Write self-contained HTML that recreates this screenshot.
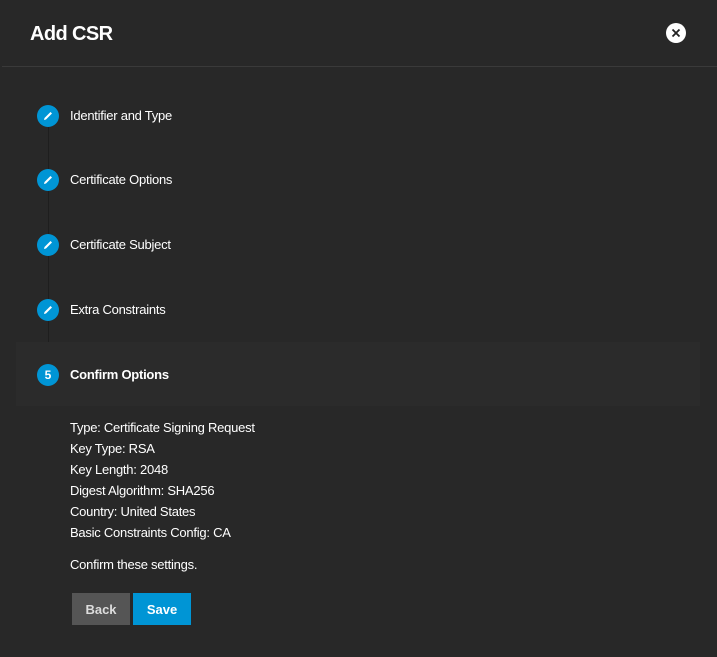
<!DOCTYPE html>
<html><head><style>
body{margin:0;width:717px;height:657px;background:#282828;font-family:"Liberation Sans",sans-serif;color:#fff;position:relative;overflow:hidden}
.t{position:absolute;left:30px;top:23px;font-size:20px;font-weight:bold;letter-spacing:-0.6px}
.x{position:absolute;left:666px;top:23px;width:20px;height:20px;border-radius:50%;background:#fff}
.hr{position:absolute;left:2px;right:0;top:66px;height:1px;background:#3a3a3a}
.line{position:absolute;left:48px;width:1px;background:#1e1e1e}
.st{position:absolute;left:37px;width:22px;height:22px;border-radius:50%;background:#0095d5;display:flex;align-items:center;justify-content:center;font-size:12px;font-weight:bold}
.lb{position:absolute;left:70px;font-size:13px;letter-spacing:-0.25px}
.act{position:absolute;left:16px;width:684px;top:342px;height:64px;background:#2b2b2b}
.c{position:absolute;left:70px;font-size:13px;line-height:21px;top:417px;letter-spacing:-0.25px}
.b{position:absolute;top:593px;height:32px;width:58px;font-size:13px;font-weight:bold;display:flex;align-items:center;justify-content:center}
</style></head><body>
<div class="t">Add CSR</div>
<div class="x"><svg width="20" height="20"><path d="M6.5 6.5L13.5 13.5M13.5 6.5L6.5 13.5" stroke="#222" stroke-width="1.8"/></svg></div>
<div class="hr"></div>
<div class="line" style="top:127px;height:220px"></div>
<div class="act"></div>
<div class="st" style="top:105px"><svg width="12" height="12"><path d="M2 10L2.5 8L8.5 2L10 3.5L4 9.5Z" fill="#fff"/></svg></div>
<div class="lb" style="top:108px">Identifier and Type</div>
<div class="st" style="top:169px"><svg width="12" height="12"><path d="M2 10L2.5 8L8.5 2L10 3.5L4 9.5Z" fill="#fff"/></svg></div>
<div class="lb" style="top:172px">Certificate Options</div>
<div class="st" style="top:234px"><svg width="12" height="12"><path d="M2 10L2.5 8L8.5 2L10 3.5L4 9.5Z" fill="#fff"/></svg></div>
<div class="lb" style="top:237px">Certificate Subject</div>
<div class="st" style="top:299px"><svg width="12" height="12"><path d="M2 10L2.5 8L8.5 2L10 3.5L4 9.5Z" fill="#fff"/></svg></div>
<div class="lb" style="top:302px">Extra Constraints</div>
<div class="st" style="top:364px">5</div>
<div class="lb" style="top:367px;font-weight:bold">Confirm Options</div>
<div class="c">Type: Certificate Signing Request<br>Key Type: RSA<br>Key Length: 2048<br>Digest Algorithm: SHA256<br>Country: United States<br>Basic Constraints Config: CA</div>
<div class="c" style="top:554px">Confirm these settings.</div>
<div class="b" style="left:72px;background:#555;color:#ddd">Back</div>
<div class="b" style="left:133px;background:#0095d5">Save</div>
</body></html>
